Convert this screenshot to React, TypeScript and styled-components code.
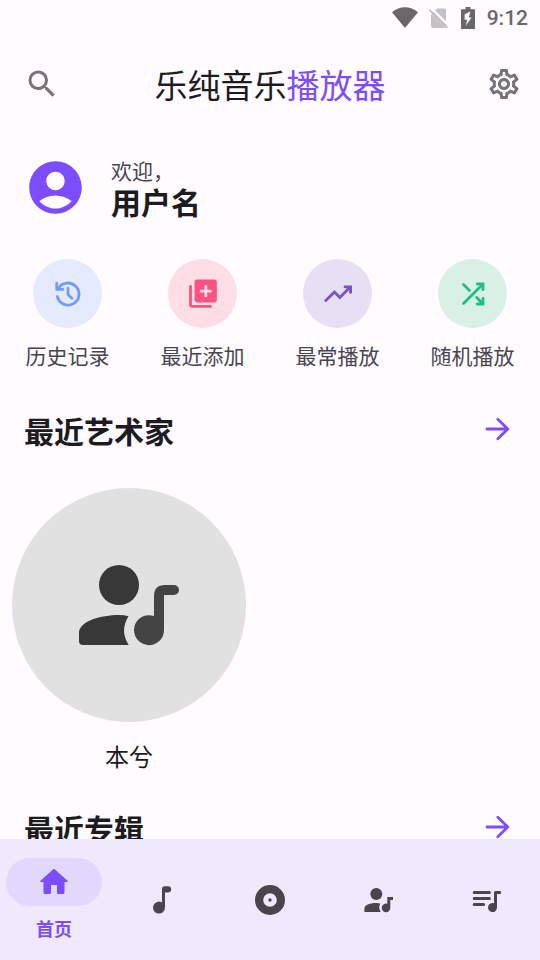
import React from "react";
import styled, { createGlobalStyle } from "styled-components";
import { MdOutlineSettings, MdSearch } from "react-icons/md";

const GlobalStyle = createGlobalStyle`
  * { box-sizing: border-box; }
  body {
    margin: 0;
    background: #fffbff;
    color: #1c1b1f;
    font-family: Roboto, "Noto Sans CJK SC", sans-serif;
  }
  button, a { font: inherit; color: inherit; text-decoration: none; }
  button { border: 0; padding: 0; background: none; cursor: pointer; }
  h1, h2, p { margin: 0; }
  svg { display: block; flex: none; }
`;

const Screen = styled.div`
  height: 100vh;
  display: flex;
  flex-direction: column;
`;

const StatusBar = styled.div`
  flex: none;
  height: 36px;
  padding: 0 12px;
  display: flex;
  align-items: center;
  justify-content: flex-end;
  color: #69676b;
`;

const StatusIcons = styled.div`
  display: flex;
  align-items: center;
  gap: 11px;
  margin-right: 12px;
`;

const Clock = styled.span`
  font-size: 21px;
  line-height: 36px;
  font-weight: 500;
`;

const AppBar = styled.header`
  flex: none;
  height: 96px;
  padding: 0 18px 0 24px;
  display: flex;
  align-items: center;
  justify-content: space-between;
`;

const IconButton = styled.button<{ $color: string }>`
  display: flex;
  color: ${(p) => p.$color};
`;

const AppTitle = styled.h1`
  flex: 1;
  padding: 6px 6px 0 0;
  text-align: center;
  font-size: 33px;
  line-height: 48px;
  font-weight: 400;
`;

const Accent = styled.span`
  color: #7c4dff;
`;

const Content = styled.main`
  flex: 1;
  min-height: 0;
  overflow-y: auto;
  scrollbar-width: none;
`;

const Profile = styled.section`
  display: flex;
  align-items: center;
  gap: 24px;
  padding: 22px 24px 0;
  color: #7c4dff;
`;

const Greeting = styled.div`
  padding-top: 3px;
`;

const Welcome = styled.p`
  font-size: 21px;
  line-height: 30px;
  color: #49454f;
`;

const UserName = styled.p`
  font-size: 30px;
  line-height: 33px;
  font-weight: 700;
  color: #1c1b1f;
`;

const Shortcuts = styled.div`
  display: grid;
  grid-template-columns: repeat(4, 1fr);
  padding-top: 39px;
`;

const Shortcut = styled.button`
  display: flex;
  flex-direction: column;
  align-items: center;
  gap: 14px;
  font-size: 21px;
  line-height: 30px;
  color: #49454f;
`;

const ShortcutDisc = styled.span<{ $bg: string; $fg: string }>`
  width: 69px;
  height: 69px;
  border-radius: 50%;
  display: flex;
  align-items: center;
  justify-content: center;
  background: ${(p) => p.$bg};
  color: ${(p) => p.$fg};
`;

const SectionHeader = styled.div`
  display: flex;
  align-items: center;
  justify-content: space-between;
  padding: 0 24px;
`;

const SectionTitle = styled.h2`
  font-size: 30px;
  line-height: 44px;
  padding-top: 8px;
  font-weight: 700;
`;

const Section = styled.section`
  padding-top: 31px;
`;

const ArtistRow = styled.div`
  display: flex;
  padding: 33px 12px 0;
`;

const ArtistCard = styled.a`
  display: flex;
  flex-direction: column;
  align-items: center;
  gap: 24px;
  font-size: 24px;
  line-height: 24px;
`;

const ArtistCover = styled.span`
  width: 234px;
  height: 234px;
  border-radius: 50%;
  display: flex;
  align-items: center;
  justify-content: center;
  background: #e1e1e1;
`;

const NavBar = styled.nav`
  flex: none;
  height: 121px;
  display: grid;
  grid-template-columns: repeat(5, 1fr);
  background: #f0e9fe;
`;

const NavItem = styled.a`
  display: flex;
  flex-direction: column;
  align-items: center;
  justify-content: center;
  gap: 12px;
  font-size: 18px;
  line-height: 24px;
  font-weight: 700;
  color: #49454f;
  &[aria-current="page"] { color: #7c4dff; }
`;

const NavPill = styled.span<{ $active?: boolean }>`
  width: 96px;
  height: 48px;
  border-radius: 24px;
  display: flex;
  align-items: center;
  justify-content: center;
  background: ${(p) => (p.$active ? "#e2d7fd" : "transparent")};
`;

const lineProps = {
  width: 36,
  height: 36,
  viewBox: "0 0 36 36",
  fill: "none",
  stroke: "currentColor",
  strokeWidth: 2.8,
  strokeLinecap: "round" as const,
  strokeLinejoin: "round" as const,
  "aria-hidden": true,
};

const solidProps = {
  width: 36,
  height: 36,
  viewBox: "0 0 36 36",
  fill: "currentColor",
  "aria-hidden": true,
};

const WifiIcon = () => (
  <svg width="26" height="22" viewBox="0 0 26 22" fill="currentColor" aria-hidden>
    <path d="M0 5.2C7.6-1.3 18.4-1.3 26 5.2L13 21z" />
  </svg>
);

const NoSimIcon = () => (
  <svg width="21" height="21" viewBox="1 0 21 21" aria-hidden>
    <path d="M3 7 8.500 1.200Q9.100.5 10 .5H16.500Q18 .5 18 2V18Q18 20 16 20H5Q3 20 3 18z" fill="#c2c0c3" />
    <path d="M2.500-.6 20.700 17.600" stroke="#fffbff" strokeWidth="2.400" />
    <path d="M1.400 2 19.400 20" stroke="#c2c0c3" strokeWidth="1.800" />
    <path d="M0 3.200 20 23.200" stroke="#fffbff" strokeWidth=".3" />
  </svg>
);

const BatteryIcon = () => (
  <svg width="14" height="22" viewBox="0 0 14 22" aria-hidden>
    <path d="M4.500 0h5v2.200H14V22H0V2.200h4.500z" fill="currentColor" />
    <path d="M9.400 4.600 3.600 7.200V12.800h2.600l-1.400 6 5.800-8.400H7.800z" fill="#fffbff" />
  </svg>
);

const AccountIcon = () => (
  <svg width="63" height="63" viewBox="0 0 24 24" fill="currentColor" aria-hidden>
    <path d="M12 2C6.480 2 2 6.480 2 12s4.480 10 10 10 10-4.480 10-10S17.520 2 12 2zm0 4c1.930 0 3.500 1.570 3.500 3.500S13.930 13 12 13s-3.500-1.570-3.500-3.500S10.070 6 12 6zm0 14c-2.030 0-4.430-.82-6.140-2.880C7.550 15.800 9.680 15 12 15s4.450.8 6.140 2.120C16.430 19.180 14.030 20 12 20z" />
  </svg>
);

const HistoryIcon = () => (
  <svg {...lineProps}>
    <path d="M7.300 20.500A11 11 0 1 0 8.300 12.900" />
    <path d="M6.700 7.200v6.200h6.200M18 12.200v6.200l3.900 3.900" />
  </svg>
);

const LibraryAddIcon = () => (
  <svg {...lineProps}>
    <path d="M5.500 10.500V28.500Q5.500 30.300 7.300 30.300H25.500" />
    <rect x="9.600" y="3.600" width="22.300" height="22.800" rx="2.800" fill="currentColor" stroke="none" />
    <path d="M20.800 10.500v9.400M16.100 15.200h9.400" stroke="#ffdde7" />
  </svg>
);

const TrendingIcon = () => (
  <svg {...lineProps}>
    <path d="M5.800 24.500 14.400 16l5.400 5.500L30 11.300" strokeLinejoin="miter" />
    <path d="M25 10.800h5.600v5.600" strokeLinejoin="miter" />
  </svg>
);

const ShuffleIcon = () => (
  <svg {...lineProps} strokeLinejoin="miter">
    <path d="M8.500 27.500 27.500 8.500M8.500 8.500l6 6M21.700 21.500l5.800 5.900" />
    <path d="M22.300 8h5.700v5.600M22.300 28h5.700v-5.600" />
  </svg>
);

const ArrowIcon = () => (
  <svg {...lineProps}>
    <path d="M7 18h20.500M17.800 8.200 27.800 18l-10 9.800" />
  </svg>
);

const ArtistArtwork = () => (
  <svg width="120" height="120" viewBox="0 0 120 120" aria-hidden>
    <g fill="#383838">
      <circle cx="50" cy="40" r="20" />
      <path d="M10 88C10 76 32 70 50 70Q55 70 59.500 71.200Q50.500 85.500 59.700 100H14Q10 100 10 96z" />
    </g>
    <path
      fill="#444"
      d="M96 40h9a5 5 0 0 1 0 10H95v35A15 15 0 1 1 85 71V51Q85 40 96 40z"
    />
  </svg>
);

const HomeIcon = () => (
  <svg width="36" height="36" viewBox="0 0 24 24" fill="currentColor" aria-hidden>
    <path d="M10 19v-5h4v5c0 .55.45 1 1 1h3c.55 0 1-.45 1-1v-7h1.700c.46 0 .68-.57.33-.87L12.670 3.600c-.38-.34-.96-.34-1.340 0l-8.360 7.530c-.34.3-.13.87.33.87H5v7c0 .55.45 1 1 1h3c.55 0 1-.45 1-1z" />
  </svg>
);

const NoteIcon = () => (
  <svg {...solidProps}>
    <path d="M20.500 4.200h3.500a3 3 0 0 1 0 6.300H21V25.500A6 6 0 1 1 18 20.400V6.700Q18 4.200 20.500 4.200z" />
  </svg>
);

const AlbumIcon = () => (
  <svg {...solidProps}>
    <path
      fillRule="evenodd"
      d="M18 3a15 15 0 1 0 0 30a15 15 0 1 0 0-30zm0 8.200a6.800 6.800 0 1 1 0 13.600a6.800 6.800 0 1 1 0-13.600zm0 5.100a1.700 1.700 0 1 0 0 3.400a1.700 1.700 0 1 0 0-3.400z"
    />
  </svg>
);

const ArtistIcon = () => (
  <svg {...solidProps}>
    <circle cx="16.300" cy="12" r="6" />
    <path d="M4.400 26.500C4.400 22.700 11 21 16.300 21Q18.500 21 20.300 21.400Q18 25.800 20.800 30H4.400z" />
    <path d="M27.300 15H33v3h-2.700v7.700A4.300 4.300 0 1 1 27.300 21.800z" />
  </svg>
);

const PlaylistIcon = () => (
  <svg {...solidProps}>
    <path
      d="M6.200 10.400h15.200M6.200 16.400h15.200M6.200 22.400h9.400"
      stroke="currentColor"
      strokeWidth="3"
      strokeLinecap="round"
    />
    <path d="M27.500 9h5.300v3H29v13.500A4.500 4.500 0 1 1 26 21.300V10.500Q26 9 27.500 9z" />
  </svg>
);

const shortcuts = [
  { label: "历史记录", bg: "#e6eafe", fg: "#6f9cff", Icon: HistoryIcon },
  { label: "最近添加", bg: "#ffdde7", fg: "#fb5381", Icon: LibraryAddIcon },
  { label: "最常播放", bg: "#e7dff3", fg: "#7854c5", Icon: TrendingIcon },
  { label: "随机播放", bg: "#d9f0e7", fg: "#1fbf83", Icon: ShuffleIcon },
];

const tabs = [
  { name: "歌曲", Icon: NoteIcon },
  { name: "专辑", Icon: AlbumIcon },
  { name: "艺术家", Icon: ArtistIcon },
  { name: "播放列表", Icon: PlaylistIcon },
];

const Heading = ({ title }: { title: string }) => (
  <SectionHeader>
    <SectionTitle>{title}</SectionTitle>
    <IconButton $color="#7c4dff" aria-label={title}>
      <ArrowIcon />
    </IconButton>
  </SectionHeader>
);

export default function App() {
  return (
    <Screen lang="zh-CN">
      <GlobalStyle />
      <StatusBar>
        <StatusIcons>
          <WifiIcon />
          <NoSimIcon />
          <BatteryIcon />
        </StatusIcons>
        <Clock>9:12</Clock>
      </StatusBar>
      <AppBar>
        <IconButton $color="#757377" aria-label="搜索">
          <MdSearch size={36} />
        </IconButton>
        <AppTitle>
          乐纯音乐<Accent>播放器</Accent>
        </AppTitle>
        <IconButton $color="#757377" aria-label="设置">
          <MdOutlineSettings size={36} />
        </IconButton>
      </AppBar>
      <Content>
        <Profile>
          <AccountIcon />
          <Greeting>
            <Welcome>欢迎，</Welcome>
            <UserName>用户名</UserName>
          </Greeting>
        </Profile>
        <Shortcuts>
          {shortcuts.map(({ label, bg, fg, Icon }) => (
            <Shortcut key={label}>
              <ShortcutDisc $bg={bg} $fg={fg}>
                <Icon />
              </ShortcutDisc>
              {label}
            </Shortcut>
          ))}
        </Shortcuts>
        <Section>
          <Heading title="最近艺术家" />
          <ArtistRow>
            <ArtistCard href="#artist">
              <ArtistCover>
                <ArtistArtwork />
              </ArtistCover>
              本兮
            </ArtistCard>
          </ArtistRow>
        </Section>
        <Section>
          <Heading title="最近专辑" />
        </Section>
      </Content>
      <NavBar>
        <NavItem href="#home" aria-current="page">
          <NavPill $active>
            <HomeIcon />
          </NavPill>
          首页
        </NavItem>
        {tabs.map(({ name, Icon }) => (
          <NavItem key={name} href={`#${name}`} aria-label={name}>
            <NavPill>
              <Icon />
            </NavPill>
          </NavItem>
        ))}
      </NavBar>
    </Screen>
  );
}
